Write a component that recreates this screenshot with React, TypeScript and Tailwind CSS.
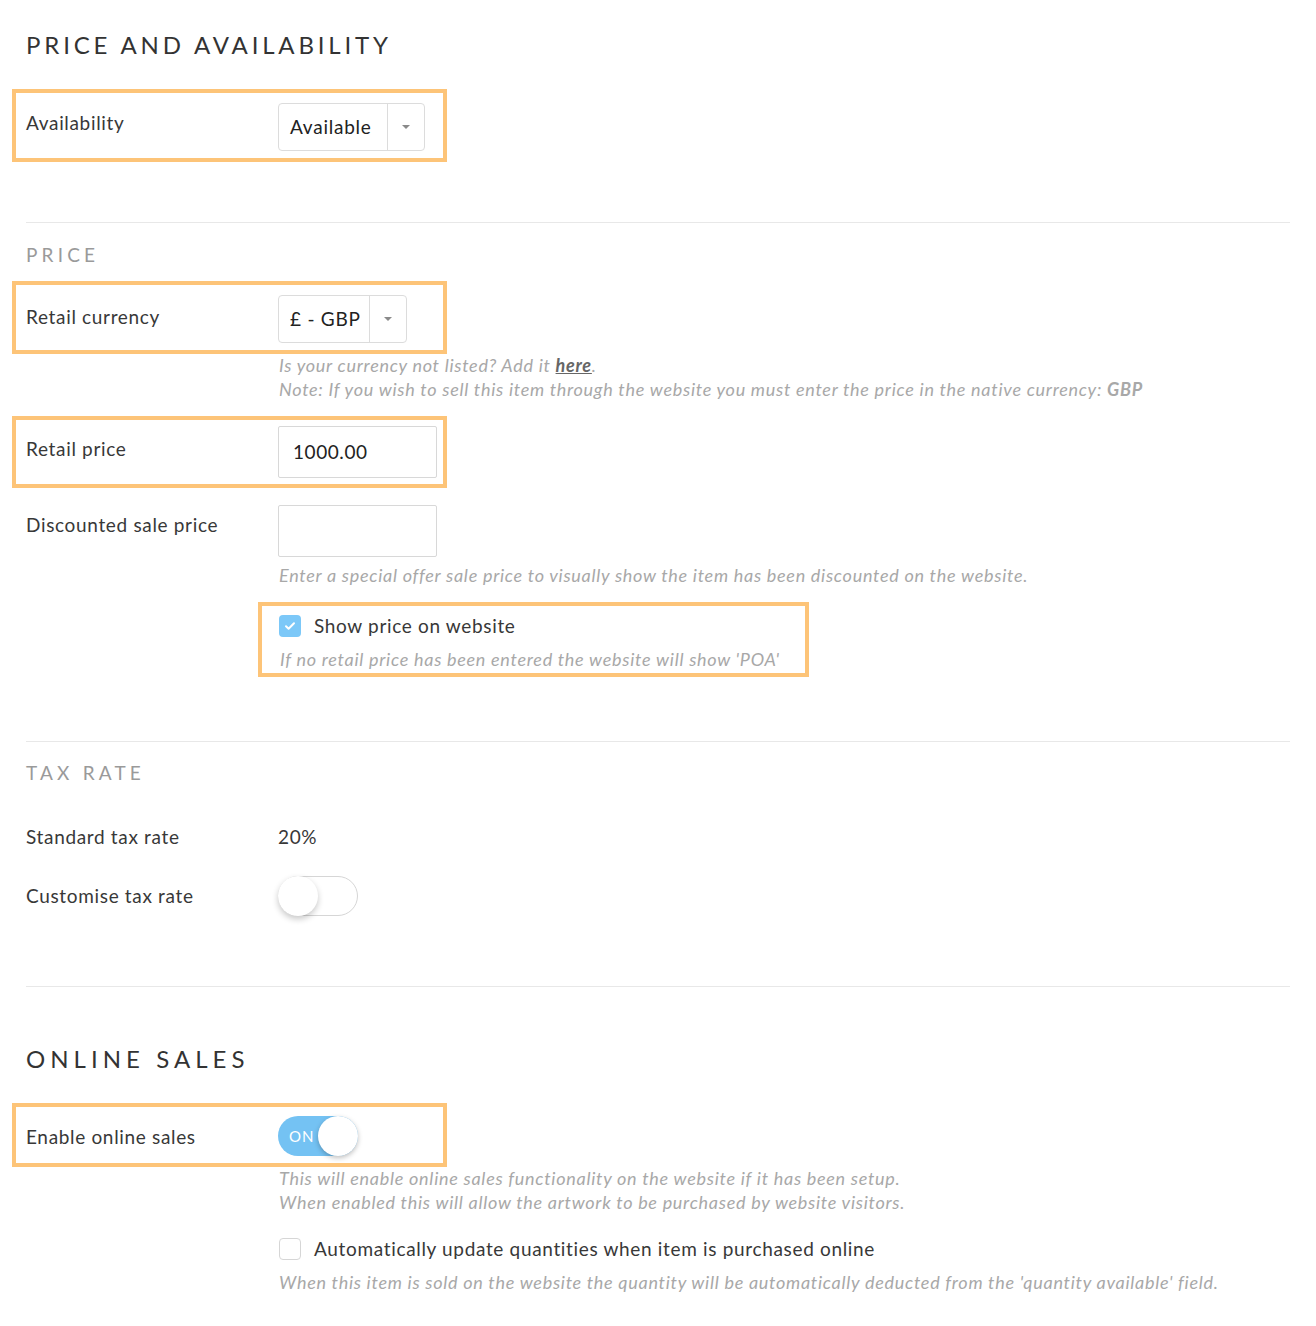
import { FC, ReactNode } from "react";

const font = { fontFamily: "Lato, 'Open Sans', sans-serif" };

const Caret: FC = () => (
  <svg width="10" height="6" viewBox="0 0 10 6" className="block">
    <path d="M1 1h8L5 5z" fill="#8a8a8a" />
  </svg>
);

const Select: FC<{ value: string; width: string }> = ({ value, width }) => (
  <div
    className={`flex h-[48px] ${width} items-stretch rounded-[4px] border border-[#dcdcdc] bg-white`}
  >
    <div className="flex flex-1 items-center pl-[11px] text-[19px] tracking-[0.04em] text-[#222]">{value}</div>
    <div className="flex w-[37px] items-center justify-center border-l border-[#dcdcdc]">
      <Caret />
    </div>
  </div>
);

const Input: FC<{ value?: string }> = ({ value }) => (
  <div className="flex h-[52px] w-[159px] items-center rounded-[2px] border border-[#d8d8d8] bg-white pl-[14px] text-[19px] tracking-[0.03em] text-[#222]">
    {value}
  </div>
);

const Hint: FC<{ children: ReactNode }> = ({ children }) => (
  <p className="text-[18px] leading-[24px] tracking-[0.04em] italic text-[#a8a8a8]">{children}</p>
);

const Label: FC<{ children: ReactNode; className?: string }> = ({ children, className }) => (
  <div className={`w-[252px] shrink-0 text-[19px] leading-[24px] tracking-[0.035em] text-[#383838] ${className ?? ""}`}>
    {children}
  </div>
);

const Highlight: FC<{ children: ReactNode; className?: string }> = ({ children, className }) => (
  <div className={`border-4 border-[#fdc478] ${className ?? ""}`}>{children}</div>
);

const Divider: FC<{ className?: string }> = ({ className }) => (
  <div className={`h-px bg-[#e8e8e8] ${className ?? ""}`} />
);

const Toggle: FC<{ on?: boolean }> = ({ on }) =>
  on ? (
    <div className="flex h-[40px] w-[80px] items-center rounded-full bg-[#74c2f3]">
      <span className="ml-[11px] w-[29px] text-[15px] tracking-[0.06em] text-white">ON</span>
      <span className="h-[40px] w-[40px] rounded-full bg-white shadow-[0_2px_5px_rgba(0,0,0,0.25)]" />
    </div>
  ) : (
    <div className="flex h-[40px] w-[80px] items-center rounded-full border border-[#d6d6d6] bg-white">
      <span className="-ml-px h-[40px] w-[40px] rounded-full bg-white shadow-[0_3px_6px_rgba(0,0,0,0.22)]" />
    </div>
  );

const Checkbox: FC<{ checked?: boolean }> = ({ checked }) =>
  checked ? (
    <span className="flex h-[22px] w-[22px] items-center justify-center rounded-[4px] bg-[#7cc8f8]">
      <svg width="12" height="10" viewBox="0 0 12 10">
        <path d="M2 5.2l2.6 2.5L10 2.3" stroke="white" strokeWidth="2" fill="none" strokeLinecap="round" strokeLinejoin="round" />
      </svg>
    </span>
  ) : (
    <span className="h-[22px] w-[22px] rounded-[4px] border border-[#d6d6d6] bg-white" />
  );

const App: FC = () => {
  return (
    <div className="min-h-screen bg-white pl-[26px] pr-[26px] pt-[29px] pb-[30px]" style={font}>
      <h1 className="text-[24px] leading-[32px] tracking-[0.16em] text-[#333]">PRICE AND AVAILABILITY</h1>

      <Highlight className="-ml-[14px] mt-[28px] w-[435px] pl-[10px] pt-[10px] pb-[7px]">
        <div className="flex items-start">
          <Label className="mt-[8px]">Availability</Label>
          <Select value="Available" width="w-[147px]" />
        </div>
      </Highlight>

      <Divider className="mt-[60px]" />

      <h2 className="mt-[20px] text-[19px] leading-[24px] tracking-[0.22em] text-[#9a9a9a]">PRICE</h2>

      <Highlight className="-ml-[14px] mt-[14px] w-[435px] pl-[10px] pt-[10px] pb-[7px]">
        <div className="flex items-start">
          <Label className="mt-[10px]">Retail currency</Label>
          <Select value="£ - GBP" width="w-[129px]" />
        </div>
      </Highlight>
      <div className="ml-[253px] -mt-px">
        <Hint>
          Is your currency not listed? Add it{" "}
          <a href="#" className="font-bold text-[#666] underline">
            here
          </a>
          .
        </Hint>
        <Hint>
          Note: If you wish to sell this item through the website you must enter the price in the native currency:{" "}
          <span className="font-bold">GBP</span>
        </Hint>
      </div>

      <Highlight className="-ml-[14px] mt-[15px] w-[435px] pl-[10px] pt-[6px] pb-[6px]">
        <div className="flex items-start">
          <Label className="mt-[11px]">Retail price</Label>
          <Input value="1000.00" />
        </div>
      </Highlight>

      <div className="mt-[17px] flex items-start">
        <Label className="mt-[8px]">Discounted sale price</Label>
        <Input />
      </div>
      <div className="ml-[253px] mt-[6px]">
        <Hint>Enter a special offer sale price to visually show the item has been discounted on the website.</Hint>
      </div>

      <Highlight className="ml-[232px] mt-[15px] w-fit pl-[17px] pr-[25px] pt-[8px] pb-[2px]">
        <div className="flex items-center gap-[13px]">
          <Checkbox checked />
          <span className="text-[19px] leading-[24px] tracking-[0.035em] text-[#383838]">Show price on website</span>
        </div>
        <div className="mt-[9px] pl-[1px]">
          <Hint>If no retail price has been entered the website will show 'POA'</Hint>
        </div>
      </Highlight>

      <Divider className="mt-[64px]" />

      <h2 className="mt-[19px] text-[19px] leading-[24px] tracking-[0.22em] text-[#9a9a9a]">TAX RATE</h2>

      <div className="mt-[40px] flex items-center">
        <Label>Standard tax rate</Label>
        <span className="text-[19px] leading-[24px] tracking-[0.035em] text-[#383838]">20%</span>
      </div>

      <div className="mt-[27px] flex items-center">
        <Label>Customise tax rate</Label>
        <Toggle />
      </div>

      <Divider className="mt-[70px]" />

      <h1 className="mt-[56px] text-[24px] leading-[32px] tracking-[0.21em] text-[#333]">ONLINE SALES</h1>

      <Highlight className="-ml-[14px] mt-[28px] w-[435px] pl-[10px] pt-[9px] pb-[7px]">
        <div className="flex items-center">
          <Label className="mt-[2px]">Enable online sales</Label>
          <Toggle on />
        </div>
      </Highlight>
      <div className="ml-[253px] -mt-px">
        <Hint>This will enable online sales functionality on the website if it has been setup.</Hint>
        <Hint>When enabled this will allow the artwork to be purchased by website visitors.</Hint>
      </div>

      <div className="ml-[253px] mt-[23px] flex items-center gap-[13px]">
        <Checkbox />
        <span className="text-[19px] leading-[24px] tracking-[0.035em] text-[#383838]">
          Automatically update quantities when item is purchased online
        </span>
      </div>
      <div className="ml-[253px] mt-[9px]">
        <Hint>
          When this item is sold on the website the quantity will be automatically deducted from the 'quantity
          available' field.
        </Hint>
      </div>
    </div>
  );
};

export default App;
